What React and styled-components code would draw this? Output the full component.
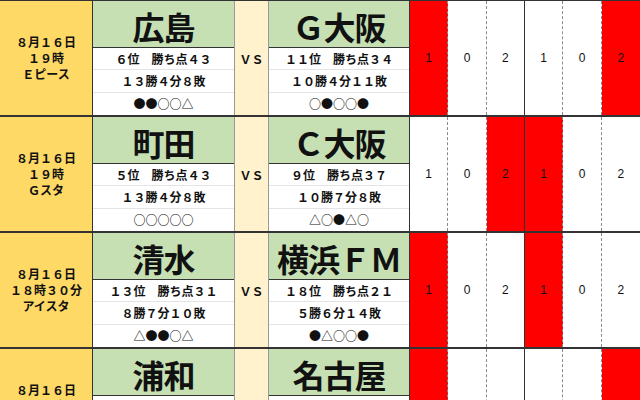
import React from "react";
import styled, { createGlobalStyle } from "styled-components";

const Global = createGlobalStyle`
  html, body { margin: 0; padding: 0; background: #fff; overflow: hidden; }
  body { font-family: "Noto Sans CJK JP", "Noto Sans", sans-serif; color: #111; }
`;

const Table = styled.div`
  width: 640px;
  border-top: 1px solid #333;
`;

const Row = styled.div`
  display: grid;
  grid-template-columns: 93px 142px 34px 141px 1fr;
  height: 116px;
  box-sizing: border-box;
  border-bottom: 2px solid #333;
`;

const DateCell = styled.div`
  background: #ffd966;
  border-right: 1px solid #333;
  display: flex;
  flex-direction: column;
  align-items: center;
  justify-content: center;
  font-size: 12px;
  font-weight: 700;
  line-height: 16px;
  text-align: center;
`;

const TeamCell = styled.div`
  display: grid;
  grid-template-rows: 47px 1fr 1fr 1fr;
  border-right: 1px solid ${(p) => (p.$away ? "#333" : "#999")};
  min-width: 0;
`;

const TeamName = styled.div`
  background: #c6e0b4;
  border-bottom: 1px solid #333;
  box-sizing: border-box;
  display: flex;
  align-items: center;
  justify-content: center;
  padding-top: 4px;
  font-size: 32px;
  font-weight: 700;
  white-space: nowrap;
  letter-spacing: -1px;
`;

const SubRow = styled.div`
  background: #fff;
  display: flex;
  align-items: center;
  justify-content: center;
  font-size: 12px;
  font-weight: 700;
  white-space: nowrap;
  border-bottom: ${(p) => (p.$last ? "none" : "1px solid #e4e4e4")};
`;

const VsCell = styled.div`
  background: #fff2cc;
  border-right: 1px solid #999;
  display: flex;
  align-items: center;
  justify-content: center;
  font-size: 12px;
  font-weight: 700;
`;

const Scores = styled.div`
  display: grid;
  grid-template-columns: repeat(6, 1fr);
`;

const ScoreCell = styled.div`
  background: ${(p) => (p.$red ? "#ff0000" : "#fff")};
  border-right: ${(p) =>
    p.$edge === "mid" ? "1px solid #333" : p.$edge === "last" ? "none" : "1px dashed #8a8a8a"};
  display: flex;
  align-items: center;
  justify-content: center;
  font-family: "Liberation Sans", Arial, sans-serif;
  font-size: 12px;
  color: #111;
`;

const matches = [
  {
    date: ["８月１６日", "１９時", "Ｅピース"],
    home: { name: "広島", rank: "６位　勝ち点４３", record: "１３勝４分８敗", form: "●●○○△" },
    away: { name: "Ｇ大阪", rank: "１１位　勝ち点３４", record: "１０勝４分１１敗", form: "○●○○●" },
    red: [0, 5],
  },
  {
    date: ["８月１６日", "１９時", "Ｇスタ"],
    home: { name: "町田", rank: "５位　勝ち点４３", record: "１３勝４分８敗", form: "○○○○○" },
    away: { name: "Ｃ大阪", rank: "９位　勝ち点３７", record: "１０勝７分８敗", form: "△○●△○" },
    red: [2, 3],
  },
  {
    date: ["８月１６日", "１８時３０分", "アイスタ"],
    home: { name: "清水", rank: "１３位　勝ち点３１", record: "８勝７分１０敗", form: "△●●○△" },
    away: { name: "横浜ＦＭ", rank: "１８位　勝ち点２１", record: "５勝６分１４敗", form: "●△○○●" },
    red: [0, 3],
  },
  {
    date: ["８月１６日", "１９時", "埼スタ"],
    home: { name: "浦和", rank: "７位　勝ち点４０", record: "１１勝７分７敗", form: "○●△○●" },
    away: { name: "名古屋", rank: "１２位　勝ち点３３", record: "９勝６分１０敗", form: "●○△●○" },
    red: [0, 5],
  },
];

const scoreValues = [1, 0, 2, 1, 0, 2];

function Team({ team, away }) {
  return (
    <TeamCell $away={away}>
      <TeamName>{team.name}</TeamName>
      <SubRow>{team.rank}</SubRow>
      <SubRow>{team.record}</SubRow>
      <SubRow $last>{team.form}</SubRow>
    </TeamCell>
  );
}

export default function App() {
  return (
    <>
      <Global />
      <Table>
        {matches.map((m, i) => (
          <Row key={i}>
            <DateCell>
              {m.date.map((d, j) => (
                <div key={j}>{d}</div>
              ))}
            </DateCell>
            <Team team={m.home} />
            <VsCell>ＶＳ</VsCell>
            <Team team={m.away} away />
            <Scores>
              {scoreValues.map((v, k) => (
                <ScoreCell
                  key={k}
                  $red={m.red.includes(k)}
                  $edge={k === 2 ? "mid" : k === 5 ? "last" : "dash"}
                >
                  {v}
                </ScoreCell>
              ))}
            </Scores>
          </Row>
        ))}
      </Table>
    </>
  );
}
